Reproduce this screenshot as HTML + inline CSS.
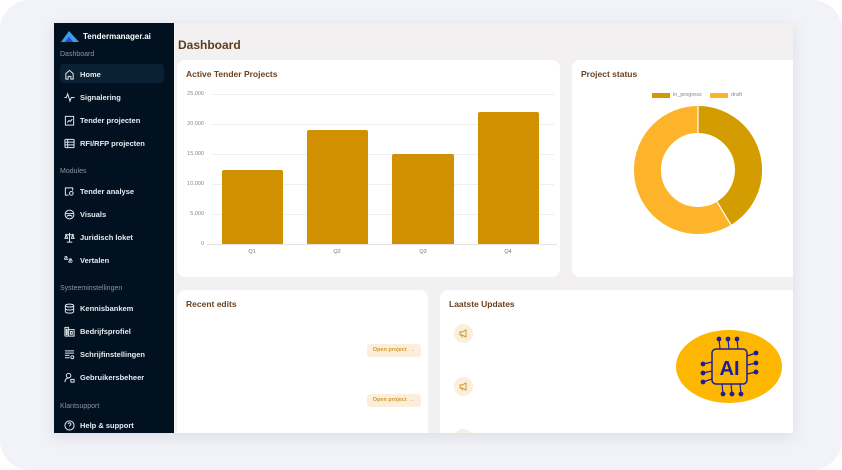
<!DOCTYPE html>
<html><head><style>
*{margin:0;padding:0;box-sizing:border-box}
body{width:842px;height:450px;background:#fff;font-family:"Liberation Sans",sans-serif;position:relative;overflow:hidden}
.frame{position:absolute;left:0;top:0;width:842px;height:470px;background:#f2f3f8;border-radius:30px}
.app{position:absolute;left:54px;top:23px;width:739px;height:410px;background:#f2f0f0;box-shadow:0 4px 14px rgba(120,130,160,.18);overflow:hidden}
.side{position:absolute;left:0;top:0;width:120px;height:410px;background:#02111f;color:#e6ebf0}
.sec{position:absolute;left:6px;font-size:7px;color:#8a95a3}
.it{position:absolute;left:10px;font-size:7.5px;font-weight:600;display:flex;align-items:center;gap:5px;height:12px}
.it svg{width:11px;height:11px;stroke:#dfe5ec;fill:none;stroke-width:1.1}
.card{position:absolute;background:#fff;border-radius:8px}
.ttl{position:absolute;left:9px;top:9px;font-size:8.5px;font-weight:bold;color:#6a4220}
.yl{position:absolute;font-size:5.5px;color:#888;text-align:right;width:30px}
.bar{position:absolute;background:#d09000;border-radius:2px 2px 0 0}
.ql{position:absolute;font-size:5.5px;color:#777;width:20px;text-align:center}
.btn{position:absolute;left:190px;width:54px;height:13px;background:#fbefdc;border-radius:3px;font-size:5.5px;color:#d39a2a;font-weight:bold;line-height:13px;text-align:center}
.mic{position:absolute;left:14px;width:19px;height:19px;border-radius:50%;background:#fbeedb}
.mic svg{position:absolute;left:5px;top:5px}
</style></head><body>
<div class="frame"></div>
<div class="app">
 <div class="side">
  <svg style="position:absolute;left:7px;top:7px" width="18" height="12" viewBox="0 0 18 12"><path d="M0 12 L8 1 L18 12 L12 12 L8 7 L4 12Z" fill="#3b9cf0"/><path d="M8 7 L12 12 L4 12Z" fill="#1e4fd0"/></svg>
  <div style="position:absolute;left:29px;top:9px;font-size:8px;font-weight:bold;color:#fff">Tendermanager.ai</div>
  <div class="sec" style="top:28px">Dashboard</div>
  <div style="position:absolute;left:6px;top:41px;width:104px;height:19px;background:#0a2033;border-radius:3px"></div>
  <div class="it" style="top:45px"><svg viewBox="0 0 12 12"><path d="M2 11V5L6 1.5 10 5v6H7.5V8h-3v3z"/></svg>Home</div>
  <div class="it" style="top:68px"><svg viewBox="0 0 12 12"><path d="M0.5 6h2l1.5-4 2.5 8 1.5-4h3.5"/></svg>Signalering</div>
  <div class="it" style="top:91px"><svg viewBox="0 0 12 12"><rect x="1.5" y="1.5" width="9" height="9.5"/><path d="M3.5 8l2-2 1.5 1 2-2.5"/></svg>Tender projecten</div>
  <div class="it" style="top:114px"><svg viewBox="0 0 12 12"><rect x="1" y="1.5" width="10" height="9" rx="1"/><path d="M1 4.5h10M1 7.5h10M4 1.5v9"/></svg>RFI/RFP projecten</div>
  <div class="sec" style="top:145px">Modules</div>
  <div class="it" style="top:162px"><svg viewBox="0 0 12 12"><path d="M5 10H1.5V2h8v3"/><circle cx="8" cy="8" r="2"/></svg>Tender analyse</div>
  <div class="it" style="top:185px"><svg viewBox="0 0 12 12"><circle cx="6" cy="6" r="4.8"/><path d="M2 5h8M3 8c2-1.5 4-1.5 6 0"/></svg>Visuals</div>
  <div class="it" style="top:208px"><svg viewBox="0 0 12 12"><path d="M6 1v10M3 11h6M1 3h10M2.5 3L1 7h3zM9.5 3L8 7h3z"/></svg>Juridisch loket</div>
  <div class="it" style="top:231px"><span style="font-size:7px;width:11px">a<sub style="font-size:5px">あ</sub></span>Vertalen</div>
  <div class="sec" style="top:262px">Systeeminstellingen</div>
  <div class="it" style="top:279px"><svg viewBox="0 0 12 12"><ellipse cx="6" cy="2.8" rx="4.5" ry="1.6"/><path d="M1.5 2.8v6.6c0 1 2 1.6 4.5 1.6s4.5-.6 4.5-1.6V2.8M1.5 6c0 1 2 1.6 4.5 1.6S10.5 7 10.5 6"/></svg>Kennisbankem</div>
  <div class="it" style="top:302px"><svg viewBox="0 0 12 12"><path d="M1 11V1.5h4V11M5 4h6v7H1M2.5 3v7M3.5 3v7M7 6h2v3H7z"/></svg>Bedrijfsprofiel</div>
  <div class="it" style="top:325px"><svg viewBox="0 0 12 12"><path d="M1 2h10M1 4.5h10M1 7h5M1 9.5h5"/><circle cx="9" cy="9" r="1.6"/></svg>Schrijfinstellingen</div>
  <div class="it" style="top:348px"><svg viewBox="0 0 12 12"><circle cx="5" cy="4" r="2.5"/><path d="M1 11c0-3 2-4.5 4-4.5M7.5 8h3.5v3H7.5z"/></svg>Gebruikersbeheer</div>
  <div class="sec" style="top:380px">Klantsupport</div>
  <div class="it" style="top:396px"><svg viewBox="0 0 12 12"><circle cx="6" cy="6" r="5"/><path d="M4.5 4.5a1.5 1.5 0 1 1 2 1.4c-.5.2-.5.6-.5 1.1M6 8.7v.3"/></svg>Help &amp; support</div>
 </div>
 <div style="position:absolute;left:124px;top:15px;font-size:12px;font-weight:bold;color:#5e3d1e">Dashboard</div>

 <div class="card" style="left:123px;top:37px;width:383px;height:217px">
  <div class="ttl">Active Tender Projects</div>
  <svg style="position:absolute;left:0;top:0" width="383" height="217">
   <g stroke="#f1eeee" stroke-width="1"><line x1="35" y1="34.5" x2="377" y2="34.5"/><line x1="35" y1="64.5" x2="377" y2="64.5"/><line x1="35" y1="94.5" x2="377" y2="94.5"/><line x1="35" y1="124.5" x2="377" y2="124.5"/><line x1="35" y1="154.5" x2="377" y2="154.5"/><line x1="30" y1="184.5" x2="380" y2="184.5" stroke="#e6e2e2"/></g>
  </svg>
  <div class="yl" style="left:-3px;top:31px">25.000</div>
  <div class="yl" style="left:-3px;top:61px">20.000</div>
  <div class="yl" style="left:-3px;top:91px">15.000</div>
  <div class="yl" style="left:-3px;top:121px">10.000</div>
  <div class="yl" style="left:-3px;top:151px">5.000</div>
  <div class="yl" style="left:-3px;top:181px">0</div>
  <div class="bar" style="left:45px;top:110px;width:61px;height:74px"></div>
  <div class="bar" style="left:130px;top:70px;width:61px;height:114px"></div>
  <div class="bar" style="left:215px;top:94px;width:62px;height:90px"></div>
  <div class="bar" style="left:301px;top:52px;width:61px;height:132px"></div>
  <div class="ql" style="left:65px;top:189px">Q1</div>
  <div class="ql" style="left:150px;top:189px">Q2</div>
  <div class="ql" style="left:236px;top:189px">Q3</div>
  <div class="ql" style="left:321px;top:189px">Q4</div>
 </div>

 <div class="card" style="left:518px;top:37px;width:230px;height:217px">
  <div class="ttl">Project status</div>
  <div style="position:absolute;left:80px;top:33px;width:18px;height:5px;background:#d29a00"></div>
  <div style="position:absolute;left:101px;top:32px;font-size:5.5px;color:#888">in_progress</div>
  <div style="position:absolute;left:138px;top:33px;width:18px;height:5px;background:#fdb32a"></div>
  <div style="position:absolute;left:159px;top:32px;font-size:5.5px;color:#888">draft</div>
  <svg style="position:absolute;left:61px;top:45px" width="130" height="130" viewBox="-65 -65 130 130">
   <circle r="50.5" fill="none" stroke="#fdb32a" stroke-width="27"/>
   <circle r="50.5" fill="none" stroke="#d39c00" stroke-width="27" stroke-dasharray="130.5 400" transform="rotate(-90)"/>
   <line x1="0" y1="-37" x2="0" y2="-64" stroke="#fff" stroke-width="1.2"/>
   <line x1="19" y1="31.7" x2="33" y2="55" stroke="#fff" stroke-width="1.2"/>
  </svg>
 </div>

 <div class="card" style="left:123px;top:267px;width:251px;height:150px">
  <div class="ttl">Recent edits</div>
  <div class="btn" style="top:54px">Open project &nbsp;→</div>
  <div class="btn" style="top:104px">Open project &nbsp;→</div>
 </div>

 <div class="card" style="left:386px;top:267px;width:360px;height:150px">
  <div class="ttl">Laatste Updates</div>
  <div class="mic" style="top:34px"><svg width="9" height="9" viewBox="0 0 9 9" fill="none" stroke="#c98f20" stroke-width="0.9"><path d="M1 3h2l4-2v7L3 6H1zM2.5 6l1 2.5"/></svg></div>
  <div class="mic" style="top:87px"><svg width="9" height="9" viewBox="0 0 9 9" fill="none" stroke="#c98f20" stroke-width="0.9"><path d="M1 3h2l4-2v7L3 6H1zM2.5 6l1 2.5"/></svg></div>
  <div class="mic" style="top:139px"></div>
  <svg style="position:absolute;left:236px;top:40px" width="106" height="73" viewBox="0 0 106 73">
   <ellipse cx="53" cy="36.5" rx="53" ry="36.5" fill="#fdb700"/>
   <g stroke="#1b1e9a" stroke-width="1.2" fill="#1b1e9a">
    <rect x="36" y="19" width="35" height="35" rx="4" fill="none" stroke-width="1.5"/>
    <line x1="44" y1="19" x2="43" y2="9"/><line x1="53" y1="19" x2="52" y2="9"/><line x1="62" y1="19" x2="61" y2="9"/>
    <circle cx="43" cy="9" r="1.8"/><circle cx="52" cy="9" r="1.8"/><circle cx="61" cy="9" r="1.8"/>
    <line x1="46" y1="54" x2="47" y2="64"/><line x1="55" y1="54" x2="56" y2="64"/><line x1="64" y1="54" x2="65" y2="64"/>
    <circle cx="47" cy="64" r="1.8"/><circle cx="56" cy="64" r="1.8"/><circle cx="65" cy="64" r="1.8"/>
    <line x1="71" y1="26" x2="80" y2="23"/><line x1="71" y1="35" x2="80" y2="33"/><line x1="71" y1="44" x2="80" y2="42"/>
    <circle cx="80" cy="23" r="1.8"/><circle cx="80" cy="33" r="1.8"/><circle cx="80" cy="42" r="1.8"/>
    <line x1="36" y1="32" x2="27" y2="34"/><line x1="36" y1="41" x2="27" y2="43"/><line x1="36" y1="49" x2="27" y2="52"/>
    <circle cx="27" cy="34" r="1.8"/><circle cx="27" cy="43" r="1.8"/><circle cx="27" cy="52" r="1.8"/>
   </g>
   <text x="53.5" y="45" text-anchor="middle" font-family="Liberation Sans" font-weight="bold" font-size="20" fill="#1b1e9a">AI</text>
  </svg>
 </div>
</div>
</body></html>
